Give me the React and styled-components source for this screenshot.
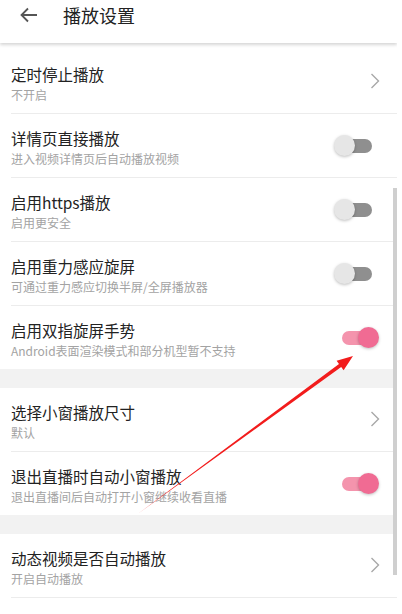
import styled, { createGlobalStyle } from 'styled-components';

const GlobalStyle = createGlobalStyle`
	html, body {
		margin: 0;
		padding: 0;
		background: #fff;
	}
	body {
		font-family: "Noto Sans CJK SC", "Noto Sans", sans-serif;
		overflow: hidden;
	}
`;

const sections = [
	[
		{ title: '定时停止播放', sub: '不开启', type: 'link' },
		{ title: '详情页直接播放', sub: '进入视频详情页后自动播放视频', type: 'switch', on: false },
		{ title: '启用https播放', sub: '启用更安全', type: 'switch', on: false },
		{ title: '启用重力感应旋屏', sub: '可通过重力感应切换半屏/全屏播放器', type: 'switch', on: false },
		{ title: '启用双指旋屏手势', sub: 'Android表面渲染模式和部分机型暂不支持', type: 'switch', on: true },
	],
	[
		{ title: '选择小窗播放尺寸', sub: '默认', type: 'link' },
		{ title: '退出直播时自动小窗播放', sub: '退出直播间后自动打开小窗继续收看直播', type: 'switch', on: true },
	],
	[
		{ title: '动态视频是否自动播放', sub: '开启自动播放', type: 'link' },
		{ title: '其他播放设置与默认清晰度选择', sub: '', type: 'link' },
	],
];

const App = () => {
	return (
		<Page>
			<GlobalStyle />
			<Header>
				<BackIcon viewBox="0 0 20 20">
					<path d="M18 10H3M9 3.5L2.5 10 9 16.5" />
				</BackIcon>
				<HeaderTitle>播放设置</HeaderTitle>
			</Header>
			<List>
				{sections.map((group, gi) => (
					<Group key={gi}>
						{gi > 0 && <Band />}
						{group.map((item, i) => (
							<Row key={item.title} last={i === group.length - 1 && gi < sections.length - 1}>
								<Texts>
									<Title>{item.title}</Title>
									<Sub>{item.sub}</Sub>
								</Texts>
								{item.type === 'link' ? (
									<Chevron viewBox="0 0 10 16">
										<polyline points="1.5,1 8.5,8 1.5,15" />
									</Chevron>
								) : (
									<Switch>
										<Track on={item.on} />
										<Thumb on={item.on} />
									</Switch>
								)}
							</Row>
						))}
					</Group>
				))}
			</List>
			<Scrollbar />
			<Annotation viewBox="0 0 402 614">
				<path d="M139 513 L341.2 367 L343.6 370.3 L353 356 L336.6 360.7 L339 364 Z" />
			</Annotation>
		</Page>
	);
};

export default App;

const Page = styled.div`
	position: relative;
	width: 397px;
	height: 614px;
	overflow: hidden;
	background: #fff;
`;

const Header = styled.div`
	display: flex;
	align-items: flex-start;
	height: 43px;
	padding-left: 19px;
	background: #fff;
	box-shadow: 0 2px 3px rgba(0, 0, 0, 0.16);
	position: relative;
	z-index: 1;
`;

const BackIcon = styled.svg`
	width: 20px;
	height: 20px;
	margin-top: 5px;
	fill: none;
	stroke: #555;
	stroke-width: 1.8;
`;

const HeaderTitle = styled.div`
	margin-left: 24px;
	font-size: 18px;
	line-height: 30px;
	color: #222;
`;

const List = styled.div`
	margin-top: 7px;
`;

const Group = styled.div``;

const Band = styled.div`
	height: 19px;
	background: #f2f2f2;
`;

const Row = styled.div`
	display: flex;
	align-items: center;
	justify-content: space-between;
	height: 63px;
	margin-left: 11px;
	border-bottom: ${(p) => (p.last ? 'none' : '1px solid #ececec')};
	box-sizing: content-box;
`;

const Texts = styled.div`
	display: flex;
	flex-direction: column;
	align-self: flex-start;
	padding-top: 14px;
`;

const Title = styled.div`
	font-size: 15.5px;
	line-height: 21px;
	color: #222;
`;

const Sub = styled.div`
	margin-top: 2px;
	font-size: 12px;
	line-height: 16px;
	color: #a3a3a3;
`;

const Chevron = styled.svg`
	width: 10px;
	height: 16px;
	margin-right: 17px;
	margin-top: -2px;
	fill: none;
	stroke: #a8a8a8;
	stroke-width: 1.4;
`;

const Switch = styled.div`
	position: relative;
	width: 46px;
	height: 24px;
	margin-right: 17px;
`;

const Track = styled.div`
	position: absolute;
	left: 8px;
	top: 5px;
	width: 30px;
	height: 14px;
	border-radius: 7px;
	background: ${(p) => (p.on ? '#f494ad' : '#8f8f8f')};
`;

const Thumb = styled.div`
	position: absolute;
	top: 1px;
	left: ${(p) => (p.on ? '24px' : '0')};
	width: 21px;
	height: 21px;
	border-radius: 50%;
	background: ${(p) => (p.on ? '#f06b93' : '#e6e6e6')};
	box-shadow: 0 1px 3px rgba(0, 0, 0, 0.25);
`;

const Scrollbar = styled.div`
	position: absolute;
	left: 393px;
	top: 188px;
	width: 4px;
	height: 387px;
	background: #cfcfcf;
`;

const Annotation = styled.svg`
	position: absolute;
	left: 0;
	top: 0;
	width: 402px;
	height: 614px;
	pointer-events: none;
	fill: #f21c1c;
`;
